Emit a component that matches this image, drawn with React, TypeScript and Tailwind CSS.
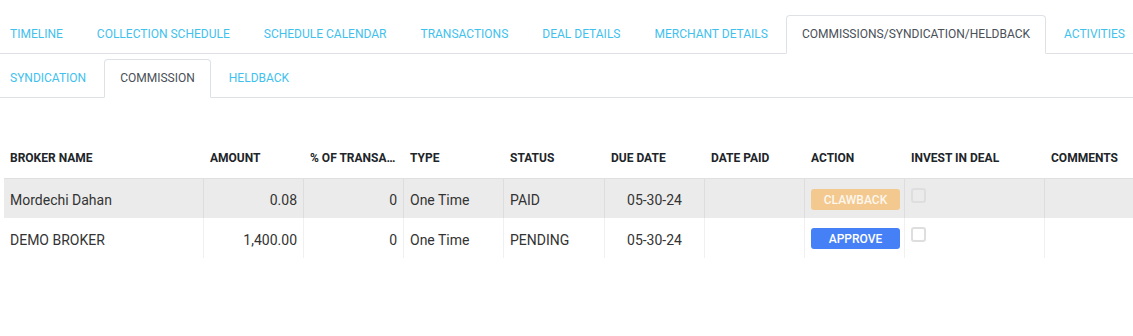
import React from "react";

const topTabs = [
  "TIMELINE",
  "COLLECTION SCHEDULE",
  "SCHEDULE CALENDAR",
  "TRANSACTIONS",
  "DEAL DETAILS",
  "MERCHANT DETAILS",
  "COMMISSIONS/SYNDICATION/HELDBACK",
  "ACTIVITIES",
];
const subTabs = ["SYNDICATION", "COMMISSION", "HELDBACK"];

function Tab({ label, active }: { label: string; active: boolean }) {
  return (
    <div
      className={
        "h-[39px] -mb-px mr-[2px] px-[15px] pb-[2px] flex items-center whitespace-nowrap text-[12px] rounded-t-[4px] border " +
        (active
          ? "border-[#dee2e6] border-b-white bg-white text-[#495057]"
          : "border-transparent text-[#3fc1ee]")
      }
    >
      {label}
    </div>
  );
}

const cols = [
  { w: "w-[200px]", label: "BROKER NAME" },
  { w: "w-[100px]", label: "AMOUNT" },
  { w: "w-[100px]", label: "% OF TRANSACTION" },
  { w: "w-[100px]", label: "TYPE" },
  { w: "w-[101px]", label: "STATUS" },
  { w: "w-[100px]", label: "DUE DATE" },
  { w: "w-[100px]", label: "DATE PAID" },
  { w: "w-[100px]", label: "ACTION" },
  { w: "w-[140px]", label: "INVEST IN DEAL" },
  { w: "flex-1", label: "COMMENTS" },
];

type Row = {
  name: string;
  amount: string;
  pct: string;
  type: string;
  status: string;
  due: string;
  action: "clawback" | "approve";
  bg: string;
};

const rows: Row[] = [
  {
    name: "Mordechi Dahan",
    amount: "0.08",
    pct: "0",
    type: "One Time",
    status: "PAID",
    due: "05-30-24",
    action: "clawback",
    bg: "bg-[#ebebeb] border-t border-[#e0e0e0]",
  },
  {
    name: "DEMO BROKER",
    amount: "1,400.00",
    pct: "0",
    type: "One Time",
    status: "PENDING",
    due: "05-30-24",
    action: "approve",
    bg: "bg-white",
  },
];

function Cell({
  w,
  last,
  className,
  children,
}: {
  w: string;
  last?: boolean;
  className?: string;
  children?: React.ReactNode;
}) {
  return (
    <div
      className={
        w +
        " shrink-0 h-full px-[6px] " +
        (last ? "" : "border-r border-[rgba(0,0,0,0.06)] ") +
        (className ?? "")
      }
    >
      {children}
    </div>
  );
}

export default function App() {
  return (
    <div className="w-[1133px] h-[336px] overflow-hidden bg-white font-['Roboto',sans-serif]">
      <div className="flex pt-[15px] border-b border-[#dee2e6]">
        <div className="flex ml-[-6px]">
          {topTabs.map((t) => (
            <Tab key={t} label={t} active={t === "COMMISSIONS/SYNDICATION/HELDBACK"} />
          ))}
        </div>
      </div>
      <div className="flex pt-[5px] border-b border-[#dee2e6]">
        <div className="flex ml-[-6px]">
          {subTabs.map((t) => (
            <Tab key={t} label={t} active={t === "COMMISSION"} />
          ))}
        </div>
      </div>

      <div className="pt-[40px] pl-[4px]">
        <div className="flex h-[40px] items-center text-[12px] font-bold text-[#212529]">
          {cols.map((c) => (
            <div key={c.label} className={c.w + " shrink-0 px-[6px] truncate"}>
              {c.label}
            </div>
          ))}
        </div>
        {rows.map((r) => (
          <div key={r.name} className={"flex h-[40px] text-[14px] text-[#333] " + r.bg}>
            <Cell w="w-[200px]" className="flex items-center pt-[4px]">
              {r.name}
            </Cell>
            <Cell w="w-[100px]" className="flex items-center justify-end pt-[4px]">
              {r.amount}
            </Cell>
            <Cell w="w-[100px]" className="flex items-center justify-end pt-[4px]">
              {r.pct}
            </Cell>
            <Cell w="w-[100px]" className="flex items-center pt-[4px]">
              {r.type}
            </Cell>
            <Cell w="w-[101px]" className="flex items-center pt-[4px]">
              {r.status}
            </Cell>
            <Cell w="w-[100px]" className="flex items-center justify-center pt-[4px]">
              {r.due}
            </Cell>
            <Cell w="w-[100px]" />
            <Cell w="w-[100px]" className="pt-[10px]">
              {r.action === "clawback" ? (
                <button className="w-[89px] h-[21px] rounded-[3px] bg-[#f3c98f] text-[#fdf7ee] text-[12px] font-medium flex items-center justify-center">
                  CLAWBACK
                </button>
              ) : (
                <button className="w-[89px] h-[21px] rounded-[3px] bg-[#4680f7] text-white text-[12px] font-medium flex items-center justify-center">
                  APPROVE
                </button>
              )}
            </Cell>
            <Cell w="w-[140px]" className="pt-[9px]">
              <div className="w-[15px] h-[15px] rounded-[3px] border-2 border-[#dedede]" />
            </Cell>
            <Cell w="flex-1" last />
          </div>
        ))}
      </div>
    </div>
  );
}
